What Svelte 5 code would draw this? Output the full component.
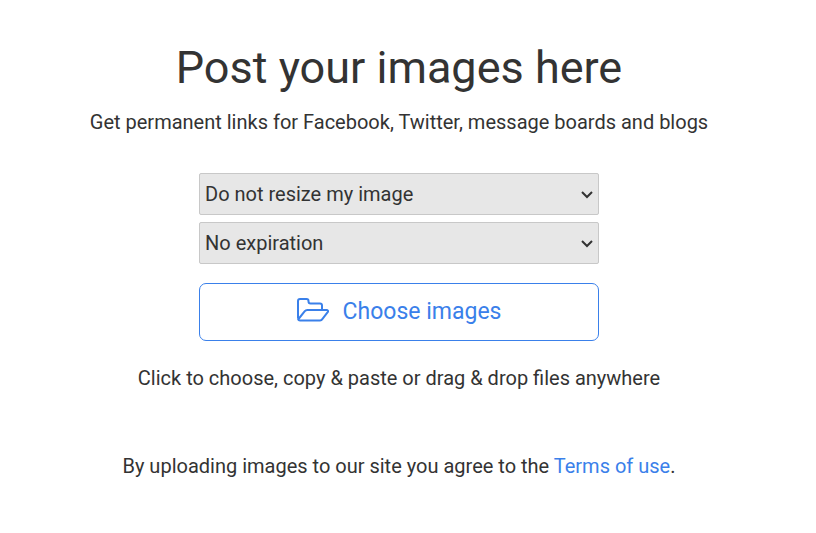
<script lang="ts">
	const sizes = [
		{ value: '0', label: 'Do not resize my image' },
		{ value: '320', label: '320x240 (for websites and email)' },
		{ value: '640', label: '640x480 (for message boards)' },
		{ value: '1024', label: '1024x768 (for 17-inch monitor)' }
	];
	const expirations = [
		{ value: '0', label: 'No expiration' },
		{ value: '1', label: 'Remove after 1 day' },
		{ value: '7', label: 'Remove after 7 days' },
		{ value: '31', label: 'Remove after 31 days' }
	];

	let size = $state('0');
	let expire = $state('0');
	let picker: HTMLInputElement;
</script>

<main class="page">
	<h1>Post your images here</h1>
	<p class="lead">Get permanent links for Facebook, Twitter, message boards and blogs</p>

	<form class="upload">
		<div class="field">
			<select aria-label="Image size" bind:value={size}>
				{#each sizes as item}
					<option value={item.value}>{item.label}</option>
				{/each}
			</select>
			<svg class="chevron" viewBox="0 0 12 8" aria-hidden="true"><path d="M1 1l5 5 5-5" /></svg>
		</div>
		<div class="field">
			<select aria-label="Expiration" bind:value={expire}>
				{#each expirations as item}
					<option value={item.value}>{item.label}</option>
				{/each}
			</select>
			<svg class="chevron" viewBox="0 0 12 8" aria-hidden="true"><path d="M1 1l5 5 5-5" /></svg>
		</div>

		<button type="button" class="choose" onclick={() => picker.click()}>
			<svg class="folder" viewBox="0 0 32 28" aria-hidden="true">
				<path d="M1 20.5V3a2 2 0 0 1 2-2h6.5a2 2 0 0 1 2 2v.5a2 2 0 0 0 2 2H23a2 2 0 0 1 2 2V12" />
				<path d="M1.5 21l6.3-7.8A3.2 3.2 0 0 1 10.3 12h19.2c1.4 0 2 1 1.2 2.1l-5.4 7A3 3 0 0 1 23 22.500H3.200A2.200 2.200 0 0 1 1 20.500" />
			</svg>
			<span>Choose images</span>
		</button>
		<input type="file" accept="image/*" multiple hidden aria-label="Images" bind:this={picker} />
	</form>

	<p class="hint">Click to choose, copy &amp; paste or drag &amp; drop files anywhere</p>
	<p class="terms">By uploading images to our site you agree to the <a href="#terms">Terms of use</a>.</p>
</main>

<style>
	:global(body) {
		background: #fff;
		color: #333;
		font-family: Roboto, sans-serif;
		font-size: 20px;
		line-height: 28px;
	}

	.page {
		padding: 40px 18px 40px 0;
		text-align: center;
	}

	h1 {
		margin: 0 0 12px;
		font-size: 45px;
		font-weight: 400;
		line-height: 56px;
	}

	p {
		margin: 0;
	}

	.upload {
		display: flex;
		flex-direction: column;
		gap: 7px;
		max-width: 400px;
		margin: 37px auto 23px;
	}

	.field {
		position: relative;
	}

	select {
		display: block;
		appearance: none;
		box-sizing: border-box;
		width: 100%;
		height: 42px;
		padding: 0 30px 0 5px;
		border: 1px solid #c8c8c8;
		border-radius: 2px;
		background: #e7e7e7;
		color: #333;
		font: inherit;
	}

	.chevron {
		position: absolute;
		right: 6px;
		top: 18px;
		width: 12px;
		height: 8px;
		fill: none;
		stroke: #333;
		stroke-width: 2;
		pointer-events: none;
	}

	.choose {
		display: flex;
		align-items: center;
		justify-content: center;
		gap: 14px;
		height: 58px;
		margin-top: 12px;
		border: 1px solid #3a80ea;
		border-radius: 7px;
		background: #fff;
		color: #3a80ea;
		font: inherit;
		font-size: 23px;
		cursor: pointer;
	}

	.folder {
		width: 32px;
		height: 28px;
		fill: none;
		stroke: currentColor;
		stroke-width: 2;
		stroke-linejoin: round;
	}

	.terms {
		margin-top: 60px;
	}

	a {
		color: #3a80ea;
		text-decoration: none;
	}

	a:hover {
		text-decoration: underline;
	}
</style>
